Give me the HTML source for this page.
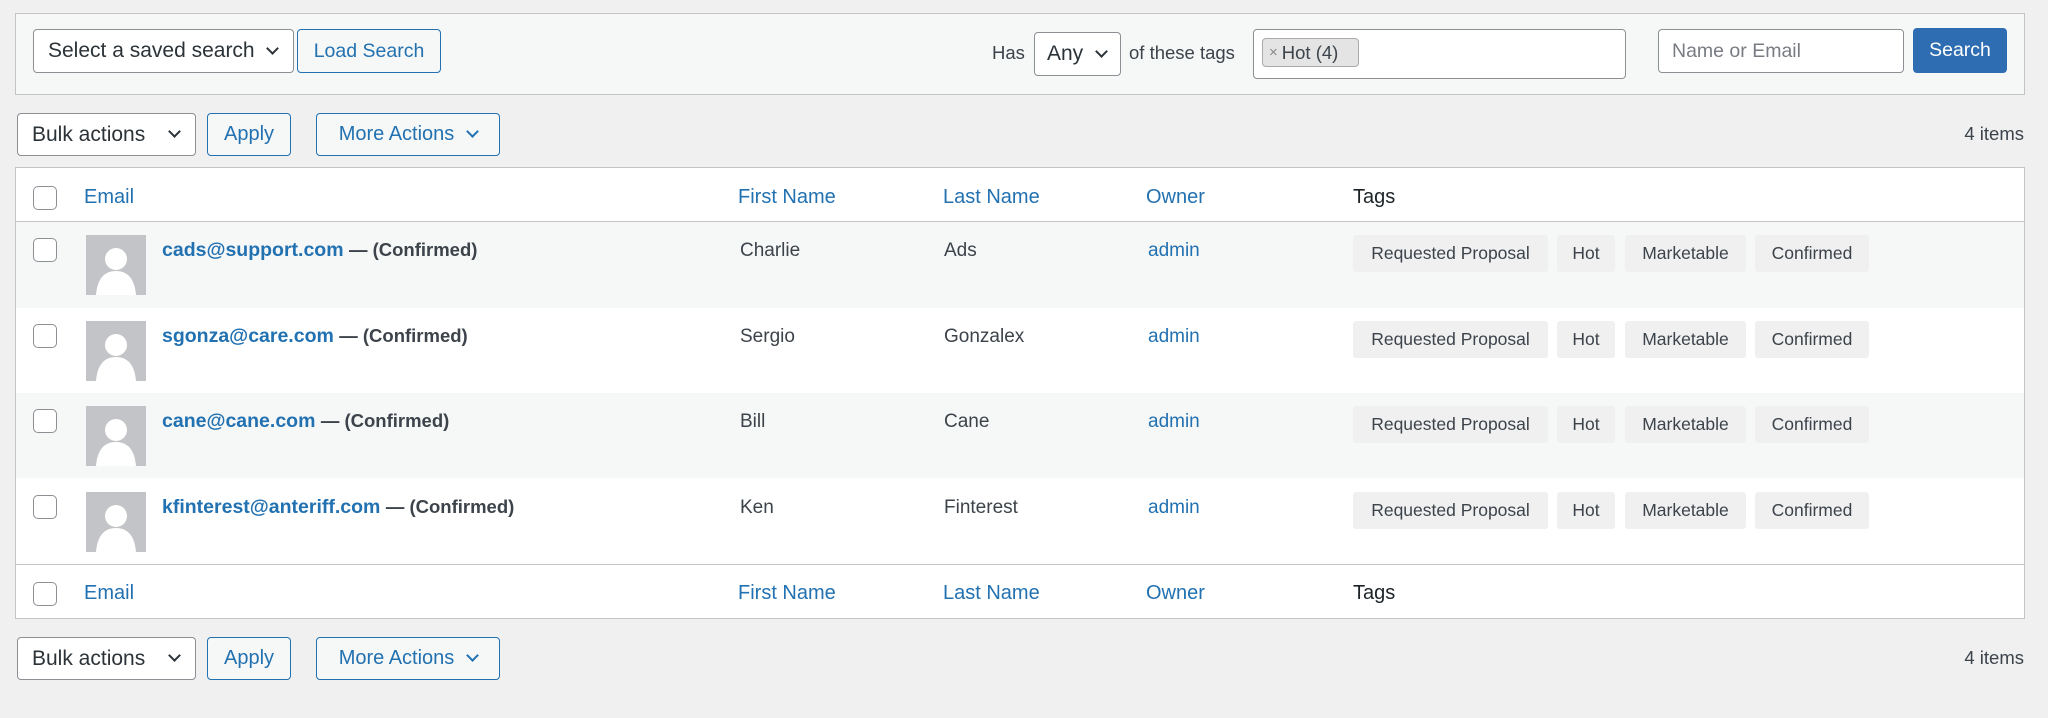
<!DOCTYPE html>
<html><head><meta charset="utf-8"><style>
*{box-sizing:border-box;margin:0;padding:0}
body{width:2048px;height:718px;background:#f0f0f1;font-family:"Liberation Sans",sans-serif;font-size:20px;color:#3c434a;position:relative;overflow:hidden}
.a{position:absolute}
.box{border:1px solid #c3c4c7}
.sel{background:#fff;border:1px solid #8c8f94;border-radius:4px;color:#2c3338;display:flex;align-items:center;padding-left:14px}
.btn{border:1px solid #2271b1;border-radius:4px;color:#2271b1;background:#f6f7f7;display:flex;align-items:center;justify-content:center}
.chev{position:absolute;width:9px;height:9px;border-right:2px solid #2c3338;border-bottom:2px solid #2c3338;transform:rotate(45deg)}
.lnk{color:#2271b1}
.cb{width:24px;height:24px;border:1.5px solid #8c8f94;border-radius:5px;background:#fff}
.tag{background:#f0f0f1;border-radius:3px;height:37px;display:flex;align-items:center;justify-content:center;font-size:17.5px;color:#3c434a}
.av{width:60px;height:60px;background:#c3c4c7;overflow:hidden}
</style></head><body>
<div class="a box" style="left:15px;top:13px;width:2010px;height:82px;background:#f6f7f7"></div>
<div class="a sel" style="left:33px;top:29px;width:261px;height:44px;font-size:21px">Select a saved search<span class="chev" style="left:234px;top:14px"></span></div>
<div class="a btn" style="left:297px;top:29px;width:144px;height:44px;font-size:19.5px">Load Search</div>
<div class="a" style="left:992px;top:42px;font-size:18.5px">Has</div>
<div class="a sel" style="left:1034px;top:32px;width:87px;height:44px;font-size:21px;padding-left:12px">Any<span class="chev" style="left:62px;top:14px"></span></div>
<div class="a" style="left:1129px;top:42px;font-size:18.5px">of these tags</div>
<div class="a" style="left:1253px;top:29px;width:373px;height:50px;background:#fff;border:1px solid #8c8f94;border-radius:4px"></div>
<div class="a" style="left:1262px;top:38px;width:97px;height:29px;background:#e4e4e4;border:1px solid #aaa;border-radius:4px;font-size:18.5px;display:flex;align-items:center;padding-left:6px"><span style="color:#888;font-size:15px;margin-right:4px">×</span>Hot (4)</div>
<div class="a" style="left:1658px;top:29px;width:246px;height:44px;background:#fff;border:1px solid #8c8f94;border-radius:4px;color:#787c82;font-size:19.5px;padding:10px 13px">Name or Email</div>
<div class="a" style="left:1913px;top:28px;width:94px;height:45px;background:#2f6db2;border-radius:4px;color:#fff;display:flex;align-items:center;justify-content:center;font-size:19.5px">Search</div>
<div class="a sel" style="left:17px;top:113px;width:179px;height:43px;font-size:21px">Bulk actions<span class="chev" style="left:152px;top:13px"></span></div>
<div class="a btn" style="left:207px;top:113px;width:84px;height:43px">Apply</div>
<div class="a btn" style="left:316px;top:113px;width:184px;height:43px">More Actions<span class="chev" style="position:relative;border-color:#2271b1;margin-left:14px;top:-3px"></span></div>
<div class="a" style="right:24px;top:123px;font-size:18.5px">4 items</div>
<div class="a box" style="left:15px;top:167px;width:2010px;height:452px;background:#fff"></div>
<div class="a" style="left:16px;top:221px;width:2008px;height:1px;background:#c3c4c7"></div>
<div class="a" style="left:16px;top:564px;width:2008px;height:1px;background:#c3c4c7"></div>
<div class="a" style="left:16px;top:222px;width:2008px;height:86px;background:#f6f7f7"></div>
<div class="a" style="left:16px;top:393px;width:2008px;height:85px;background:#f6f7f7"></div>
<div class="a cb" style="left:33px;top:186px"></div>
<div class="a lnk" style="left:84px;top:186px">Email</div>
<div class="a lnk" style="left:738px;top:186px">First Name</div>
<div class="a lnk" style="left:943px;top:186px">Last Name</div>
<div class="a lnk" style="left:1146px;top:186px">Owner</div>
<div class="a" style="left:1353px;top:186px;color:#1d2327">Tags</div>
<div class="a cb" style="left:33px;top:582px"></div>
<div class="a lnk" style="left:84px;top:582px">Email</div>
<div class="a lnk" style="left:738px;top:582px">First Name</div>
<div class="a lnk" style="left:943px;top:582px">Last Name</div>
<div class="a lnk" style="left:1146px;top:582px">Owner</div>
<div class="a" style="left:1353px;top:582px;color:#1d2327">Tags</div>
<div id="rows"></div>
<script>
var d=[["cads@support.com","Charlie","Ads"],["sgonza@care.com","Sergio","Gonzalex"],["cane@cane.com","Bill","Cane"],["kfinterest@anteriff.com","Ken","Finterest"]];
var h="";
d.forEach(function(r,i){var y=222+i*85.5;
h+='<div class="a cb" style="left:33px;top:'+(y+16)+'px"></div>';
h+='<div class="a av" style="left:86px;top:'+(y+13)+'px"><svg width="60" height="60"><circle cx="30" cy="24" r="11" fill="#fff"/><path d="M10 60 Q12 36 30 36 Q48 36 50 60Z" fill="#fff"/></svg></div>';
h+='<div class="a" style="left:162px;top:'+(y+17)+'px;font-weight:bold;font-size:19.5px"><span class="lnk">'+r[0]+'</span> <span style="font-size:18.5px">— (Confirmed)</span></div>';
h+='<div class="a" style="left:740px;top:'+(y+18)+'px;font-size:19px">'+r[1]+'</div>';
h+='<div class="a" style="left:944px;top:'+(y+18)+'px;font-size:19px">'+r[2]+'</div>';
h+='<div class="a lnk" style="left:1148px;top:'+(y+18)+'px;font-size:19px">admin</div>';
var t=[[1353,195,"Requested Proposal"],[1557,58,"Hot"],[1625,121,"Marketable"],[1755,114,"Confirmed"]];
t.forEach(function(g){h+='<div class="a tag" style="left:'+g[0]+'px;top:'+(y+13)+'px;width:'+g[1]+'px">'+g[2]+'</div>';});
});
document.getElementById("rows").innerHTML=h;
</script>
<div class="a sel" style="left:17px;top:637px;width:179px;height:43px;font-size:21px">Bulk actions<span class="chev" style="left:152px;top:13px"></span></div>
<div class="a btn" style="left:207px;top:637px;width:84px;height:43px">Apply</div>
<div class="a btn" style="left:316px;top:637px;width:184px;height:43px">More Actions<span class="chev" style="position:relative;border-color:#2271b1;margin-left:14px;top:-3px"></span></div>
<div class="a" style="right:24px;top:647px;font-size:18.5px">4 items</div>
</body></html>
